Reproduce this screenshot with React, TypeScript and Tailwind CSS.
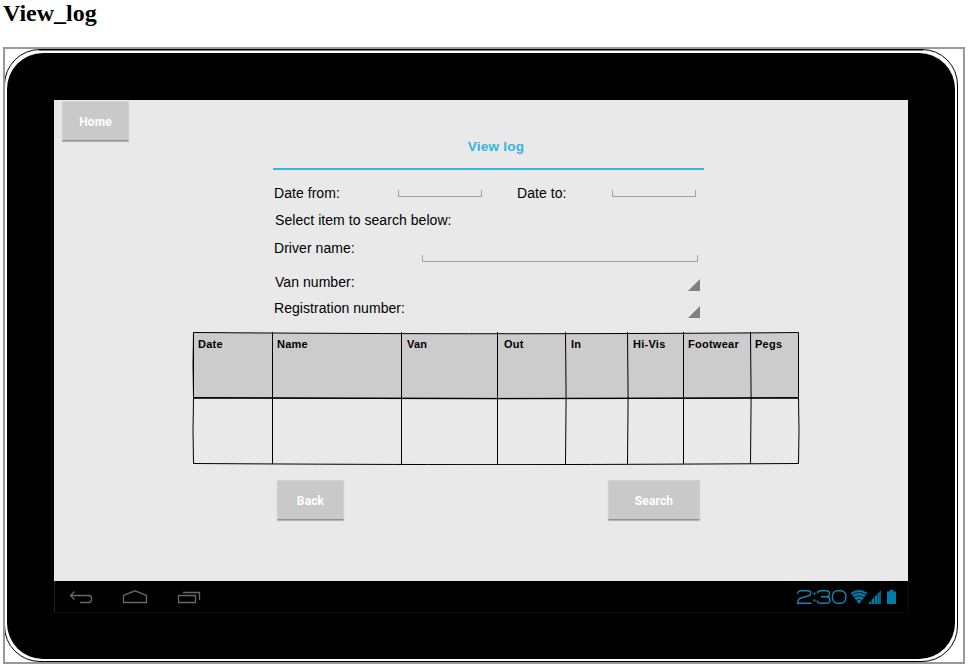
import React from "react";

function Button({ label, className }: { label: string; className: string }) {
  return (
    <button
      className={`block h-10 rounded-[1px] border border-t-[#d2d2d2] border-x-[#d0d0d0] border-b-[#919191] bg-[#c9c9c9] pt-px text-center font-['Roboto',sans-serif] text-[12px] font-bold leading-[39px] tracking-[0.15px] text-white shadow-[0_1px_1px_rgba(0,0,0,0.25)] ${className}`}
    >
      {label}
    </button>
  );
}

function Field({ className }: { className: string }) {
  return <div className={`h-[7px] border border-t-0 border-[#a0a0a0] ${className}`} />;
}

function Spinner({ className }: { className: string }) {
  return (
    <svg className={`h-3 w-3 ${className}`} viewBox="0 0 12 12">
      <path d="M12 0V12H0Z" fill="#808080" />
    </svg>
  );
}

const columns = ["Date", "Name", "Van", "Out", "In", "Hi-Vis", "Footwear", "Pegs"];

function LogTable() {
  return (
    <div className="relative ml-[138px] mt-[14px] h-[133px] w-[608px]">
      <svg className="absolute inset-0 h-full w-full" viewBox="0 0 608 133" fill="none" stroke="#000">
        <path d="M1.5 .5Q200 2 360 1.7T606.500 .5V65.500Q450 66.500 300 66.400T1.500 65.500Z" fill="#ccc" />
        <path d="M1.500 65.500Q.5 99 1.500 131.500Q180 132.600 300 132.600T606.500 131.500Q607.500 99 606.500 65.500" />
        <path d="M1.5 .5Q.5 33 1.500 65.500M80.500 0V132M209.500 0V132M305.500 0V132M373.500 0Q374.700 66 373.500 132M435.500 0Q436.700 66 435.500 132M491.500 0V132M558.500 0Q559.700 66 558.500 132" />
        <path d="M1.500 66Q180 67 300 66.700T606.500 66" strokeWidth="1.3" />
      </svg>
      <div className="relative grid grid-cols-[79px_130px_97px_67px_62px_55px_67px_50px] pl-[6px] pt-[5px] font-['Liberation_Sans',Arial,sans-serif] text-[11px] font-bold leading-[14px] tracking-[0.26px] text-black">
        {columns.map((c) => (
          <div key={c} className="whitespace-nowrap">{c}</div>
        ))}
      </div>
    </div>
  );
}

function NavBar() {
  return (
    <div className="flex h-8 justify-between border border-t-0 border-[#0c0c0c] border-l-[#222] bg-black">
      <svg className="h-8 w-[160px]" viewBox="55 581 160 32" fill="none" stroke="#686868" strokeWidth="1.3">
        <path d="M74.500 591.500L70.500 595.500L74.500 599.500M71 595.500H88.500Q91.500 595.500 91.500 598V599.500Q91.500 602.500 88.500 602.500H80" />
        <path d="M123.500 602.500V595.500L135 590.800L146.500 595.500V602.500Z" />
        <path d="M178.500 595.500H195.500V602.500H178.500ZM183 592.500H199.500V600" />
      </svg>
      <div className="flex pt-[8px]">
        <svg className="mr-[3px] h-4 w-[50px]" viewBox="0 0 50 16" fill="none" stroke="#1684ad" strokeWidth="1.4">
          <path d="M.7 5Q.7 1.700 4.500 1.700H10.500Q13.800 1.700 13.800 4.200Q13.800 6.500 10 7.300L4 9Q.7 10 .7 14.300H14.500" />
          <path d="M16.500 4.500H18.500M16.500 11.500H18.500" strokeWidth="2" />
          <path d="M20.500 4.500Q20.500 1.700 24 1.700H29Q32.500 1.700 32.500 4.500Q32.500 7.700 29 7.700H24M29 7.700Q33 7.700 33 11Q33 14.300 29 14.300H24Q20.200 14.300 20.200 11.500" />
          <rect x="35.500" y="1.700" width="13.300" height="12.600" rx="5" />
        </svg>
        <svg className="mr-[11px] h-4 w-[46px]" viewBox="850 589 46 16" fill="#007caa">
          <path d="M850.500 593Q859 587 867.500 593L859 604Z" />
          <path d="M851 595.300Q859 589.500 867 595.300M853 598Q859 593.500 865 598M855.500 600.600Q859 598 862.500 600.600" fill="none" stroke="#000" strokeWidth=".8" />
          <path d="M868 604L881 590V604Z" />
          <path d="M871.500 589V604M874.500 589V604M877.500 589V604M880 589V604" stroke="#000" strokeWidth=".5" />
          <path d="M887 591.500H889.500V590H893.500V591.500H896V604H887Z" />
        </svg>
      </div>
    </div>
  );
}

function LogScreen() {
  return (
    <div className="h-[481px] bg-[#e9e9e9] pt-px font-['Liberation_Sans',Arial,sans-serif] text-[14px] leading-5 tracking-[0.05px] text-black">
      <Button label="Home" className="ml-2 w-[67px]" />
      <div className="ml-[219px] w-[431px]">
        <h2 className="h-[29px] border-b-2 border-[#33b5e5] pl-[15px] text-center text-[13.5px] font-bold leading-[11px] tracking-[0.25px] text-[#33b5e5]">View log</h2>
        <div className="mt-[13px] flex h-5 pl-px">
          <span className="w-[124px]">Date from:</span>
          <Field className="mt-[7px] w-[84px]" />
          <span className="ml-[35px] w-[95px]">Date to:</span>
          <Field className="mt-[7px] w-[84px]" />
        </div>
        <div className="mt-[7px] pl-[2px]">Select item to search below:</div>
        <div className="mt-[8px] flex h-5 pl-px">
          <span className="w-[148px]">Driver name:</span>
          <Field className="mt-[17px] w-[276px]" />
        </div>
        <div className="mt-[14px] flex h-5 justify-between pl-[2px] pr-1">
          <span>Van number:</span>
          <Spinner className="mt-[7px]" />
        </div>
        <div className="mt-[6px] flex h-5 justify-between pl-px pr-1">
          <span>Registration number:</span>
          <Spinner className="mt-[8px]" />
        </div>
      </div>
      <LogTable />
      <div className="ml-[223px] mt-[15px] flex w-[423px] justify-between">
        <Button label="Back" className="w-[67px]" />
        <Button label="Search" className="w-[92px]" />
      </div>
    </div>
  );
}

export default function App() {
  return (
    <main className="h-[666px] w-[968px] overflow-hidden bg-white pl-[3px]">
      <h1 className="h-[47px] font-['Liberation_Serif',serif] text-[24px] font-bold leading-[27px] text-black">View_log</h1>
      <div className="h-[617px] w-[962px] overflow-hidden border-2 border-[#999]">
        <div className="-ml-px h-[613px] w-[954px] rounded-[36px] border border-black px-[2px]">
          <div className="mx-8 mb-[2px] h-px bg-[#777]" />
          <div className="h-[606px] rounded-[36px] bg-black pl-[47px] pt-[47px]">
            <div className="w-[854px]">
              <LogScreen />
              <NavBar />
            </div>
          </div>
        </div>
      </div>
    </main>
  );
}
